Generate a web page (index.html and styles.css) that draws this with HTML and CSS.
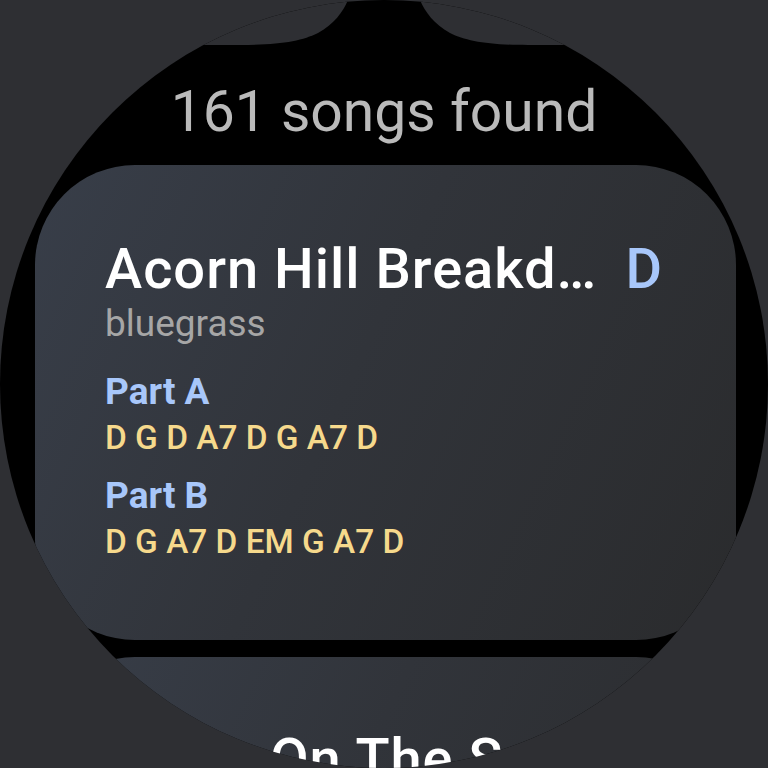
FILE: index.html
```html
<!DOCTYPE html>
<html lang="en">
<head>
<meta charset="utf-8">
<title>Songs</title>
<link rel="stylesheet" href="styles.css">
</head>
<body>
<main class="screen">
  <svg class="bezel" width="768" height="45" viewBox="0 0 768 45" aria-hidden="true">
    <path d="M0 0 H348 C343 12 334 24 318 33 C302 41 280 45 240 45 H0 Z" fill="#2e2f33"/>
    <path d="M768 0 H420 C425 12 434 24 450 33 C466 41 488 45 528 45 H768 Z" fill="#2e2f33"/>
  </svg>
  <p class="count">161 songs found</p>
  <article class="card">
    <div class="title-row">
      <h2 class="title">Acorn Hill Breakd…</h2>
      <span class="key">D</span>
    </div>
    <p class="genre">bluegrass</p>
    <section class="part">
      <h3 class="part-name">Part A</h3>
      <p class="chords">D G D A7 D G A7 D</p>
    </section>
    <section class="part">
      <h3 class="part-name">Part B</h3>
      <p class="chords">D G A7 D EM G A7 D</p>
    </section>
  </article>
  <article class="card card-next">
    <div class="title-row">
      <h2 class="title title-next">On The Sunny Side</h2>
    </div>
  </article>
</main>
</body>
</html>
```

FILE: styles.css
```css
* { box-sizing: border-box; }

html, body {
  margin: 0;
  padding: 0;
  background: #2e2f33;
}

body {
  width: 768px;
  height: 768px;
  overflow: hidden;
  font-family: Roboto, "Noto Sans", sans-serif;
}

.screen {
  width: 768px;
  height: 768px;
  border-radius: 50%;
  overflow: hidden;
  background: #000;
  display: flex;
  flex-direction: column;
}

.bezel {
  display: block;
  flex: none;
}

.count {
  margin: 38px 0 0;
  font-size: 57px;
  line-height: 57px;
  font-weight: 400;
  color: #bababa;
  text-align: center;
  flex: none;
}

.card {
  flex: none;
  margin: 25px 32px 0 35px;
  height: 475px;
  padding: 76px 74px 0 70px;
  border-radius: 100px;
  background: linear-gradient(115deg, #383e49 0%, #31343a 45%, #2a2b2d 100%);
  display: flex;
  flex-direction: column;
}

.card-next {
  margin-top: 17px;
  height: 300px;
  padding-top: 74px;
}

.title-row {
  display: flex;
  align-items: baseline;
  gap: 24px;
}

.title {
  margin: 0;
  flex: 1;
  min-width: 0;
  white-space: nowrap;
  font-size: 56px;
  line-height: 56px;
  font-weight: 500;
  letter-spacing: 1px;
  color: #ffffff;
}

.title-next {
  padding-left: 165px;
}

.key {
  font-size: 56px;
  line-height: 56px;
  font-weight: 500;
  color: #a8c7fa;
}

.genre {
  margin: 8px 0 0;
  font-size: 37px;
  line-height: 37px;
  color: #a6a6a6;
}

.part {
  margin-top: 16px;
}

.part:first-of-type {
  margin-top: 28px;
}

.part-name {
  margin: 0;
  font-size: 37px;
  line-height: 44px;
  font-weight: 700;
  color: #a8c7fa;
}

.chords {
  margin: 4px 0 0;
  font-size: 33.4px;
  line-height: 40px;
  font-weight: 500;
  color: #f6d98c;
}
```
